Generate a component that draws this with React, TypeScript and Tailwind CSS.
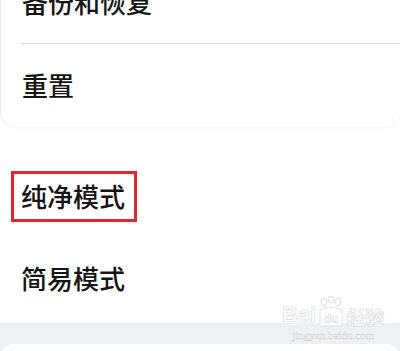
import React from 'react';

const font = { fontFamily: '"Noto Sans CJK SC", "Noto Sans", sans-serif' };

function Row({ label, boxed }: { label: string; boxed?: boolean }) {
  return (
    <div className="relative h-[82px] flex items-center pl-[21px]">
      <span className="text-[26px] leading-none font-medium text-[#151515]">{label}</span>
      {boxed && (
        <span className="absolute left-[11px] top-[16px] w-[126px] h-[51px] border-[3px] border-[#e3262d]" />
      )}
    </div>
  );
}

function Watermark() {
  return (
    <div className="absolute left-[282px] top-[296px] flex flex-col items-center pointer-events-none select-none">
      <div className="flex items-end gap-[2px]">
        <span className="text-[22px] leading-none font-bold text-white [-webkit-text-stroke:0.6px_#d8d8d8]" style={{ fontFamily: '"Liberation Sans", sans-serif' }}>
          Bai
        </span>
        <svg width="26" height="32" viewBox="0 0 26 32" className="mb-[-2px]">
          <g fill="#fff" stroke="#d8d8d8" strokeWidth="0.8">
            <ellipse cx="6" cy="6" rx="3" ry="4" />
            <ellipse cx="13" cy="3.5" rx="3" ry="3.5" />
            <ellipse cx="20" cy="6" rx="3" ry="4" />
            <path d="M2 14 Q13 8 24 14 L24 30 L2 30 Z" />
          </g>
          <text x="13" y="27" textAnchor="middle" fontSize="12" fontWeight="bold" fill="#fff" stroke="#d8d8d8" strokeWidth="0.5" fontFamily="Liberation Sans">du</text>
        </svg>
        <span className="text-[19px] leading-none font-bold text-white [-webkit-text-stroke:0.6px_#d8d8d8]" style={font}>
          经验
        </span>
      </div>
      <span className="text-[11px] leading-none mt-[4px] text-white [-webkit-text-stroke:0.5px_#d6d6d6]" style={{ fontFamily: '"Liberation Serif", serif' }}>
        jingyan.baidu.com
      </span>
    </div>
  );
}

export default function App() {
  return (
    <div className="relative w-[400px] h-[351px] overflow-hidden bg-white" style={font}>
      <div className="bg-white rounded-b-[14px] border-l border-[#ececec] shadow-[0_2px_3px_rgba(0,0,0,0.04)] -mt-[39px]">
        <Row label="备份和恢复" />
        <div className="ml-[20px] h-px bg-[#dcdcdc]" />
        <Row label="重置" />
      </div>

      <div className="h-[29px]" />

      <div className="bg-white rounded-b-[14px]">
        <Row label="纯净模式" boxed />
        <Row label="简易模式" />
        <div className="h-[4px]" />
      </div>

      <div className="bg-[#eff0f2] pt-[21px]">
        <div className="bg-white rounded-t-[14px] h-[20px]" />
      </div>

      <Watermark />
    </div>
  );
}
